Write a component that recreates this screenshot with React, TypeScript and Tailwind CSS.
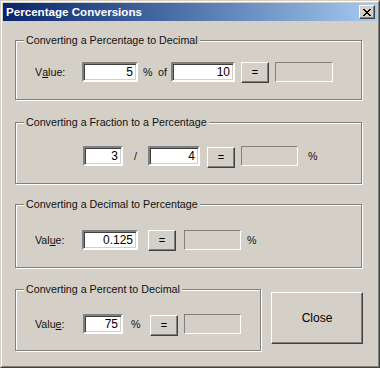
import React from 'react'

const font = { fontFamily: '"Liberation Sans", Arial, sans-serif' }

// sunken white text box
const TextBox = ({ value, w }: { value: string; w: string }) => (
    <input
        readOnly
        defaultValue={value}
        className={`${w} h-[20px] bg-white text-right pr-[3px] text-[12px] text-black outline-none border-2 border-t-[#808080] border-l-[#808080] border-r-white border-b-white shadow-[inset_1px_1px_0_#404040,inset_-1px_-1px_0_#d4d0c8]`}
    />
)

// read-only result box
const ResultBox = ({ w }: { w: string }) => (
    <div className={`${w} h-[20px] border border-t-[#808080] border-l-[#808080] border-r-white border-b-white`} />
)

const EqButton = ({ className = '' }: { className?: string }) => (
    <button className={`w-[28px] h-[21px] flex items-center justify-center text-[11px] text-black border border-t-white border-l-white border-r-[#404040] border-b-[#404040] shadow-[inset_-1px_-1px_0_#808080] ${className}`}>
        =
    </button>
)

const Label = ({ children, className = '' }: { children: React.ReactNode; className?: string }) => (
    <div className={`h-[20px] flex items-center text-[10.7px] text-[#111] ${className}`}>{children}</div>
)

const Group = ({ title, className, children }: { title: string; className: string; children: React.ReactNode }) => (
    <div className={`relative border border-[#808080] shadow-[inset_1px_1px_0_#fff,1px_1px_0_#fff] ${className}`}>
        <span className="absolute -top-[8px] left-[8px] px-[2px] bg-[#d4d0c8] text-[10.7px] leading-[14px] text-[#111] whitespace-nowrap">
            {title}
        </span>
        {children}
    </div>
)

export default function App() {
    return (
        <div style={font} className="w-[380px] h-[368px] bg-[#d4d0c8] border border-t-[#d4d0c8] border-l-[#d4d0c8] border-r-[#404040] border-b-[#404040]">
            <div className="h-full border border-t-white border-l-white border-r-[#808080] border-b-[#808080] p-px flex flex-col">
                {/* Title bar */}
                <div className="h-[18px] flex items-center justify-between pl-[3px] pr-[2px] bg-gradient-to-r from-[#0a246a] to-[#a6caf0]">
                    <span className="text-white font-bold text-[11.6px] leading-none">Percentage Conversions</span>
                    <button className="w-[16px] h-[14px] bg-[#d4d0c8] flex items-center justify-center border border-t-white border-l-white border-r-[#404040] border-b-[#404040] shadow-[inset_-1px_-1px_0_#808080]">
                        <svg width="8" height="7" viewBox="0 0 8 7" shapeRendering="crispEdges">
                            <path d="M0 0h2v1h-2zM6 0h2v1h-2zM1 1h2v1h-2zM5 1h2v1h-2zM2 2h4v1h-4zM3 3h2v1h-2zM2 4h4v1h-4zM1 5h2v1h-2zM5 5h2v1h-2zM0 6h2v1h-2zM6 6h2v1h-2z" fill="#000" />
                        </svg>
                    </button>
                </div>

                {/* Body */}
                <div className="flex flex-col pl-[12px]">
                    <Group title="Converting a Percentage to Decimal" className="mt-[19px] w-[347px] h-[60px]">
                        <div className="flex items-start pt-[21px] pl-[19px]">
                            <Label className="w-[47px]">V<span className="underline">a</span>lue:</Label>
                            <TextBox value="5" w="w-[56px]" />
                            <Label className="w-[20px] pl-[5px]">%</Label>
                            <Label className="w-[13px]">of</Label>
                            <TextBox value="10" w="w-[64px]" />
                            <EqButton className="ml-[6px]" />
                            <div className="ml-[6px]"><ResultBox w="w-[58px]" /></div>
                        </div>
                    </Group>

                    <Group title="Converting a Fraction to a Percentage" className="mt-[22px] w-[347px] h-[62px]">
                        <div className="flex items-start pt-[23px] pl-[67px]">
                            <TextBox value="3" w="w-[40px]" />
                            <Label className="w-[25px] pl-[11px]">/</Label>
                            <TextBox value="4" w="w-[52px]" />
                            <EqButton className="ml-[7px] mt-px" />
                            <div className="ml-[6px]"><ResultBox w="w-[57px]" /></div>
                            <Label className="pl-[10px]">%</Label>
                        </div>
                    </Group>

                    <Group title="Converting a Decimal to Percentage" className="mt-[20px] w-[347px] h-[64px]">
                        <div className="flex items-start pt-[25px] pl-[19px]">
                            <Label className="w-[47px]">Val<span className="underline">u</span>e:</Label>
                            <TextBox value="0.125" w="w-[56px]" />
                            <EqButton className="ml-[10px]" />
                            <div className="ml-[8px]"><ResultBox w="w-[57px]" /></div>
                            <Label className="pl-[6px]">%</Label>
                        </div>
                    </Group>

                    <div className="flex items-start mt-[21px]">
                        <Group title="Converting a Percent to Decimal" className="w-[246px] h-[62px]">
                            <div className="flex items-start pt-[24px] pl-[19px]">
                                <Label className="w-[48px]">Valu<span className="underline">e</span>:</Label>
                                <TextBox value="75" w="w-[40px]" />
                                <Label className="w-[27px] pl-[8px]">%</Label>
                                <EqButton className="mt-px" />
                                <div className="ml-[6px]"><ResultBox w="w-[57px]" /></div>
                            </div>
                        </Group>
                        <button className="ml-[10px] mt-[3px] w-[92px] h-[52px] flex items-center justify-center text-[12px] text-black border border-t-white border-l-white border-r-[#404040] border-b-[#404040] shadow-[inset_-1px_-1px_0_#808080]">
                            Close
                        </button>
                    </div>
                </div>
            </div>
        </div>
    )
}
